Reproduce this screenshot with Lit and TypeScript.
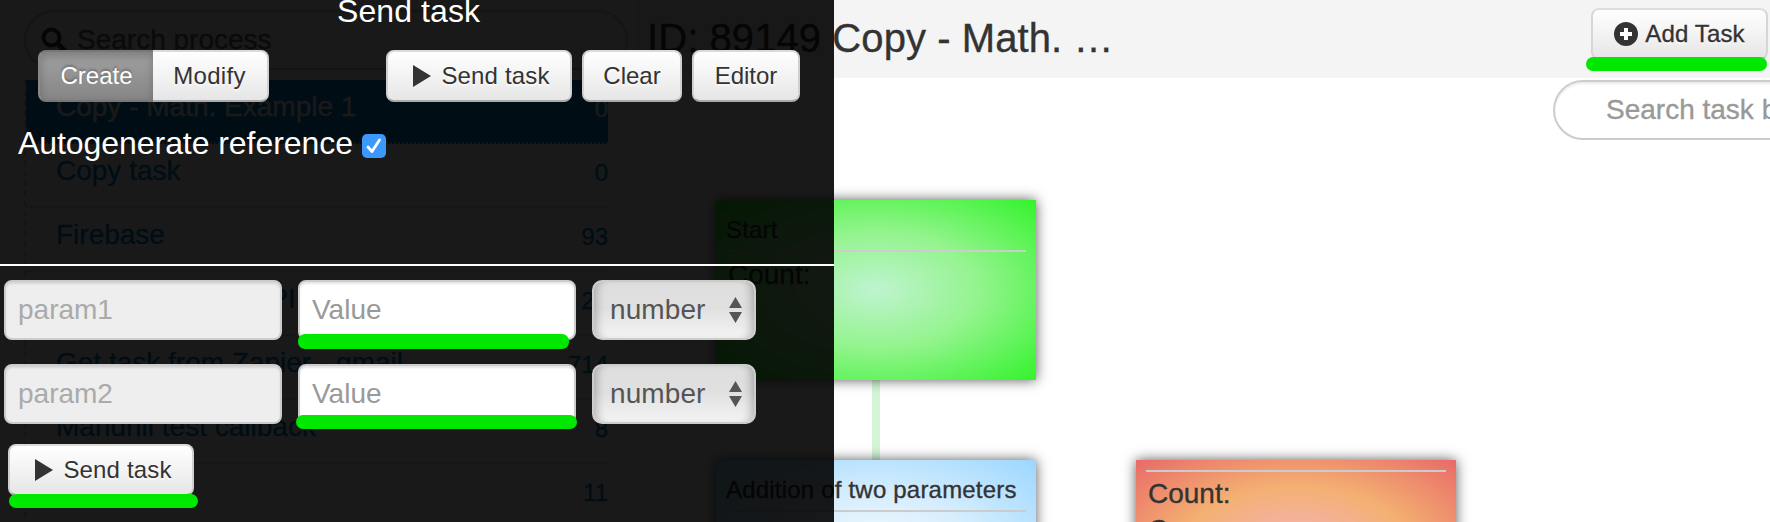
import { LitElement, html, css } from "lit";
import { customElement } from "lit/decorators.js";

const play = html`<svg class="play" width="20" height="24" viewBox="0 0 20 24"><path d="M1 1 L19 12 L1 23 Z" fill="#333"/></svg>`;

@customElement("app-root")
class AppRoot extends LitElement {
  static styles = css`
    :host { display: block; width: 1770px; height: 522px; overflow: hidden; position: relative; background: #fff; font-family: "Liberation Sans", Arial, sans-serif; color: #333; }
    * { box-sizing: border-box; }
    .page { display: grid; grid-template-columns: 635px 1135px; height: 522px; overflow: hidden; -webkit-text-stroke: .35px; }
    .side { padding: 10px 0 0 24px; overflow: hidden; height: 522px; }
    .pill { border: 2px solid #ccc; border-radius: 30px; display: flex; align-items: center; color: #999; background: #fff; box-shadow: inset 0 2px 2px rgba(0,0,0,.075); white-space: nowrap; }
    .find { width: 604px; height: 60px; padding: 0 0 0 15px; gap: 10px; font-size: 28px; color: #666; }
    .list { margin-top: 10px; border-left: 2px dashed #ccc; width: 584px; }
    .row { height: 64px; padding: 0 0 8px 30px; border-bottom: 2px dotted #ccc; display: flex; align-items: center; justify-content: space-between; color: #08c; font-size: 28px; white-space: nowrap; line-height: 50px; }
    .count { font-size: 24px; padding-top: 3px; }
    .active { background: #08c; color: #fff; }
    .title { height: 78px; background: #f4f4f4; padding: 8px 2px 0 12px; display: flex; justify-content: space-between; }
    .heading { font-size: 40px; line-height: 60px; white-space: nowrap; letter-spacing: .08px; }
    .btn { display: flex; align-items: center; justify-content: center; height: 52px; border: 2px solid #ccc; border-color: #dadada #d0d0d0 #aaa; border-radius: 8px; background: linear-gradient(#fff, #e6e6e6); font-size: 24px; color: #333; text-shadow: 0 2px 2px rgba(255,255,255,.75); white-space: nowrap; box-shadow: inset 0 2px 0 rgba(255,255,255,.2); }
    .add { width: 177px; gap: 7px; border-color: #ddd #d6d6d6 #bbb; letter-spacing: .15px; }
    .filter { margin: 2px 0 0 918px; width: 300px; height: 60px; padding-left: 51px; font-size: 28px; }
    .node { position: absolute; width: 320px; height: 180px; padding: 0 10px; box-shadow: 0 0 12px rgba(0,0,0,.65); -webkit-text-stroke: .35px; }
    .start { left: 716px; top: 200px; background: radial-gradient(ellipse farthest-corner at 50% 50%, #bff3d0 0%, #94f48e 45%, #33f32c 100%); }
    .sum { left: 716px; top: 460px; background: radial-gradient(ellipse farthest-corner at 50% 50%, #f4faff 0%, #d5edfd 45%, #9bd7ff 100%); }
    .fail { left: 1136px; top: 460px; background: radial-gradient(ellipse farthest-corner at 50% 50%, #f5b3c0 0%, #f4b072 50%, #e86a68 100%); }
    .name { height: 52px; border-bottom: 2px solid #ccc; font-size: 24px; line-height: 60px; white-space: nowrap; letter-spacing: .2px; }
    .bare { height: 12px; }
    .cnt { padding: 7px 0 0 2px; font-size: 28px; line-height: 32px; }
    .fail .cnt { line-height: 36px; padding-top: 4px; }
    .link { position: absolute; left: 872px; top: 380px; width: 8px; height: 80px; background: #d4f5d5; }
    .panel { position: absolute; left: 0; top: 0; width: 834px; height: 522px; background: rgba(0,0,0,.9); }
    .head { height: 266px; border-bottom: 2px solid #fff; color: #fff; }
    .cap { font-size: 32px; line-height: 36px; height: 50px; padding: 0 0 0 337px; display: flex; align-items: flex-start; letter-spacing: .1px; }
    .cap-text { margin-top: -7px; }
    .tools { display: flex; padding-left: 38px; gap: 10px; }
    .seg { display: flex; margin-right: 107px; }
    .create { width: 115px; border-radius: 8px 0 0 8px; background: linear-gradient(#a0a0a0, #868686); color: #fff; border-color: #777 #888; border-right-width: 0; text-shadow: 0 -2px 2px rgba(0,0,0,.25); box-shadow: inset 0 4px 8px rgba(0,0,0,.22); }
    .modify { width: 116px; border-radius: 0 8px 8px 0; border-left-width: 0; padding-right: 1px; letter-spacing: .3px; }
    .send { width: 186px; gap: 9px; padding-left: 4px; letter-spacing: .15px; }
    .clear { width: 100px; }
    .editor { width: 108px; }
    .auto { display: flex; font-size: 32px; line-height: 36px; padding: 23px 0 0 18px; gap: 9px; white-space: nowrap; letter-spacing: -.06px; }
    .check { margin-top: 9px; }
    .form { padding: 14px 0 0 4px; display: flex; flex-direction: column; gap: 24px; }
    .fields { display: flex; gap: 16px; height: 60px; }
    .field { width: 278px; height: 60px; border: 2px solid #ccc; border-radius: 8px; background: #fff; color: #999; font-size: 28px; line-height: 56px; padding-left: 12px; box-shadow: inset 0 2px 2px rgba(0,0,0,.1); }
    .off { background: #eee; color: #aaa; }
    .pick { width: 164px; height: 60px; border: 2px solid #ccc; border-radius: 10px; display: flex; align-items: center; justify-content: space-between; padding: 0 12px 0 16px; font-size: 28px; letter-spacing: .1px; color: #555; background: linear-gradient(#dedede 0, #e0e0e0 50%, #e2e2e2 51%, #f3f3f3 100%); box-shadow: inset 9px 0 8px -6px rgba(0,0,0,.24), inset -9px 0 8px -6px rgba(0,0,0,.24); }
    .bottom { margin: -4px 0 0 4px; }
    .mark { position: absolute; height: 14px; border-radius: 7px; background: #00e800; }
    .m1 { left: 298px; top: 334px; width: 271px; height: 15px; }
    .m2 { left: 296px; top: 415px; width: 281px; }
    .m3 { left: 9px; top: 494px; width: 189px; }
    .m4 { left: 1586px; top: 57px; width: 181px; }
    svg { display: block; flex: none; }
  `;

  rows = [
    ["Copy - Math. Example 1", "0"], ["Copy task", "0"], ["Firebase", "93"], ["Send task from API", "20"],
    ["Get task from Zapier - gmail", "714"], ["Mandrill test callback", "8"], ["", "11"],
  ];

  fields(n: string) {
    return html`<div class="fields">
      <div class="field off">${n}</div>
      <div class="field">Value</div>
      <div class="pick"><span>number</span>
        <svg width="13" height="26" viewBox="0 0 13 26"><path d="M0 11 L6.5 0 L13 11Z M0 15 L6.5 26 L13 15Z" fill="#555"/></svg>
      </div></div>`;
  }

  render() {
    return html`
      <div class="page">
        <div class="side">
          <div class="pill find">
            <svg width="26" height="26" viewBox="0 0 26 26" fill="none" stroke="#333" stroke-width="4"><circle cx="10.5" cy="10.5" r="8"/><path d="M16.5 16.5 L24 24" stroke-width="5"/></svg>
            <span>Search process</span>
          </div>
          <div class="list">${this.rows.map((r, i) => html`<div class="row ${i === 0 ? "active" : ""}"><span>${r[0]}</span><span class="count">${r[1]}</span></div>`)}</div>
        </div>
        <div class="main">
          <div class="title">
            <div class="heading">ID: 89149 Copy - Math. …</div>
            <div class="btn add">
              <svg width="24" height="24" viewBox="0 0 24 24"><circle cx="12" cy="12" r="12" fill="#333"/><path d="M10 6h4v4h4v4h-4v4h-4v-4H6v-4h4z" fill="#fff"/></svg>
              <span>Add Task</span>
            </div>
          </div>
          <div class="pill filter">Search task by name</div>
        </div>
      </div>
      <div class="link"></div>
      <div class="node start"><div class="name">Start</div><div class="cnt">Count:</div></div>
      <div class="node sum"><div class="name">Addition of two parameters</div></div>
      <div class="node fail"><div class="name bare"></div><div class="cnt">Count:<br>Queue:</div></div>
      <div class="panel">
        <div class="head">
          <div class="cap"><span class="cap-text">Send task</span></div>
          <div class="tools">
            <div class="seg"><div class="btn create">Create</div><div class="btn modify">Modify</div></div>
            <div class="btn send">${play}<span>Send task</span></div>
            <div class="btn clear">Clear</div>
            <div class="btn editor">Editor</div>
          </div>
          <div class="auto"><span>Autogenerate reference</span>
            <svg class="check" width="24" height="24" viewBox="0 0 24 24"><rect width="24" height="24" rx="5" fill="#3b99fc"/><path d="M6 13 L10 17.5 L17.5 6" fill="none" stroke="#fff" stroke-width="2.8" stroke-linecap="round" stroke-linejoin="round"/></svg>
          </div>
        </div>
        <div class="form">
          ${this.fields("param1")}
          ${this.fields("param2")}
          <div class="btn send bottom">${play}<span>Send task</span></div>
        </div>
      </div>
      <div class="mark m1"></div><div class="mark m2"></div><div class="mark m3"></div><div class="mark m4"></div>
    `;
  }
}
